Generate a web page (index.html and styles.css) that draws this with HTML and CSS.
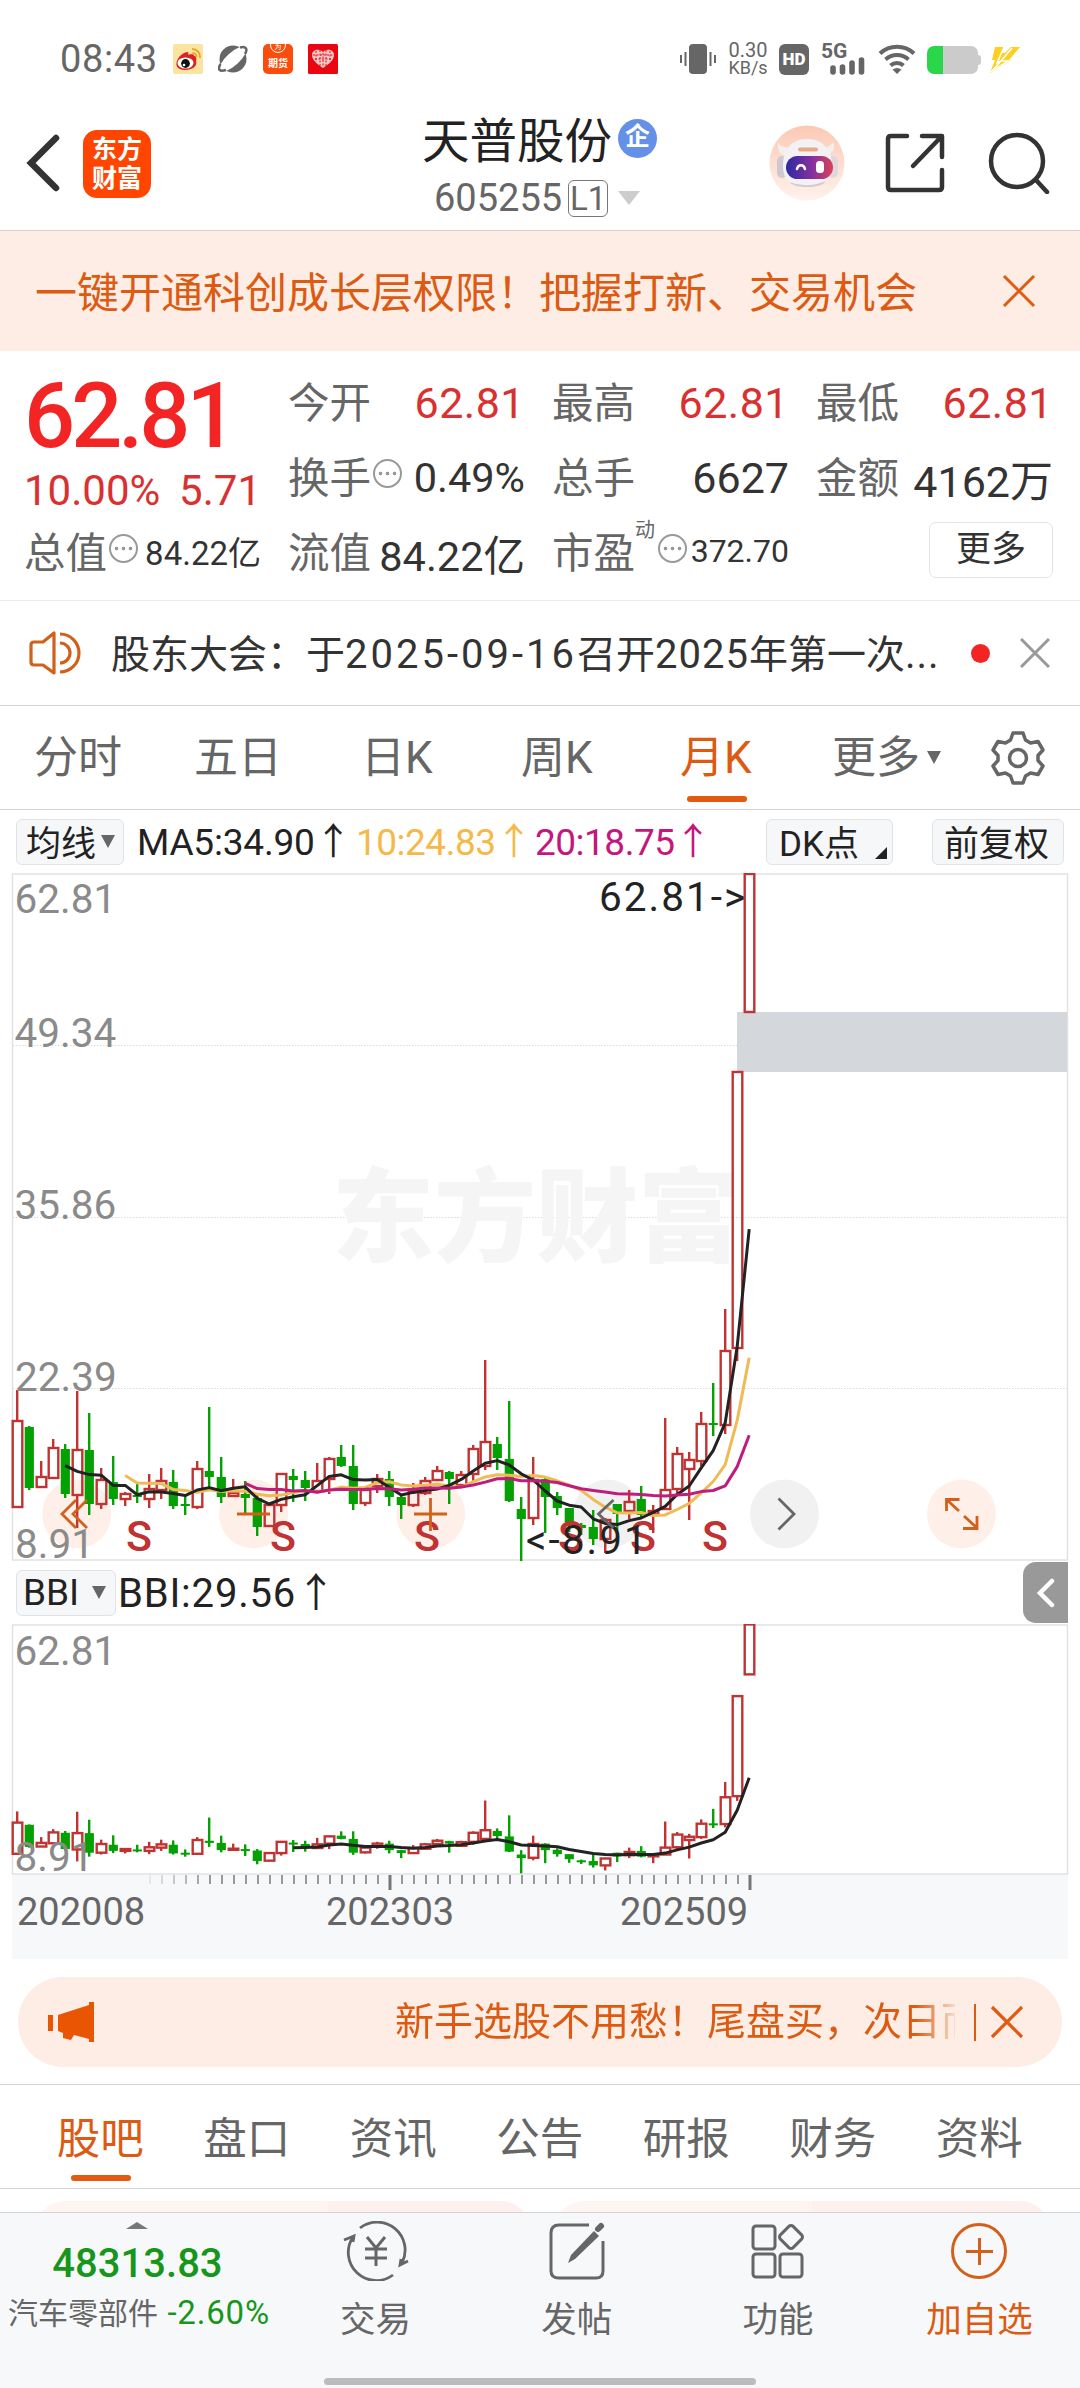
FILE: index.html
```html
<!DOCTYPE html>
<html lang="zh-CN">
<head>
<meta charset="UTF-8">
<meta name="viewport" content="width=device-width, initial-scale=1.0">
<title>天普股份 605255</title>
<link rel="stylesheet" href="styles.css">
</head>
<body>
    <div class="status-bar">
        <span class="time">08:43</span>
        <svg class="app-icon" width="30" height="30" viewBox="0 0 30 30">
            <rect width="30" height="30" rx="2" fill="#fbe3a0"/>
            <path d="M4 17c2-6 8-9 11-9 1 1 0 3 0 3s6-2 6 1c2 0 3 2 2 5 2 5-4 9-11 9S2 22 4 17z" fill="#dd2222"/>
            <ellipse cx="12.5" cy="19" rx="8" ry="5.5" fill="#fff"/>
            <circle cx="12.5" cy="19.5" r="4.4" fill="#111"/>
            <circle cx="11" cy="21" r="1.3" fill="#fff"/>
            <path d="M19 5a8 8 0 0 1 8 9M19.5 9a4 4 0 0 1 4 4" fill="none" stroke="#e8a72c" stroke-width="2"/>
        </svg>
        <svg class="app-icon" width="30" height="30" viewBox="0 0 30 30">
            <circle cx="15" cy="15" r="13.5" fill="#666"/>
            <ellipse cx="15" cy="15" rx="17" ry="6.5" transform="rotate(-42 15 15)" fill="#fff"/>
            <path d="M22 3.5C28 2 30 5 27 10M2.500 20C-1 26 2 28 8 26" fill="none" stroke="#666" stroke-width="2.5"/>
        </svg>
        <div class="app-icon futures"><i>为</i><b>期货</b></div>
        <svg class="app-icon" width="30" height="30" viewBox="0 0 30 30">
            <rect width="30" height="30" rx="1.5" fill="#ea0610"/>
            <path d="M15 24C9 20 4 16 4 11c0-5 7-7 11-3 4-4 11-2 11 3 0 5-5 9-11 13z" fill="#f8c9c9"/>
            <path d="M8 7v11M12 6v16M15 9v14M18 6v16M22 7v11M5 11h20M7 15h16" stroke="#ea0610" stroke-width="1" stroke-dasharray="2 1.5"/>
        </svg>
        <div class="status-right">
            <svg width="36" height="32" viewBox="0 0 36 32">
                <rect x="9" y="1" width="18" height="30" rx="4" fill="#666"/>
                <path d="M1 12v8M5.500 9v14M30.500 9v14M35 12v8" stroke="#666" stroke-width="2"/>
            </svg>
            <div class="net-speed"><span>0.30</span><span>KB/s</span></div>
            <div class="hd">HD</div>
            <div class="signal">
                <span>5G</span>
                <svg width="44" height="32" viewBox="0 0 44 32">
                    <path d="M12 25v4M21.5 24v5M31 20v9M40.500 17v12" stroke="#666" stroke-width="5.6" stroke-linecap="round"/>
                </svg>
            </div>
            <svg width="38" height="30" viewBox="0 0 38 30">
                <path d="M2 9.5a25 25 0 0 1 34 0M7.500 15.500a17 17 0 0 1 23 0M12.500 21.500a9.5 9.5 0 0 1 13 0" fill="none" stroke="#666" stroke-width="4"/>
                <path d="M19 30l-4.500-4.500q4.500-3 9 0z" fill="#666"/>
            </svg>
            <div class="battery"></div>
            <svg width="30" height="27" viewBox="0 0 30 27">
                <path d="M5 1h9l-3 6h4l6-6h9L19 14h3L0 27 5 14H2z" fill="#fbd01e"/>
                <path d="M14 1L7 17l4-2L1 26M22 2L11 15h8L3 24" fill="none" stroke="#fff" stroke-width="1.5"/>
            </svg>
        </div>
    </div>

    <div class="header">
        <svg class="back" width="34" height="58" viewBox="0 0 34 58">
            <path d="M30 4L5 29l25 25" fill="none" stroke="#333" stroke-width="6.5" stroke-linecap="round"/>
        </svg>
        <div class="logo"><span>东方</span><span>财富</span></div>
        <div class="title">
            <div class="name">天普股份<span class="badge">企</span></div>
            <div class="code">605255<span class="level">L1</span><i class="caret caret-title"></i></div>
        </div>
        <div class="header-icons">
            <svg width="76" height="76" viewBox="0 0 76 76">
                <defs>
                    <linearGradient id="halo" x1="0" y1="0" x2="0" y2="1">
                        <stop offset="0" stop-color="#fbc9b4"/>
                        <stop offset="1" stop-color="#fff2ec"/>
                    </linearGradient>
                    <linearGradient id="visor">
                        <stop offset="0" stop-color="#2c2aa0"/>
                        <stop offset=".55" stop-color="#8330a0"/>
                        <stop offset="1" stop-color="#dc4256"/>
                    </linearGradient>
                </defs>
                <circle cx="38" cy="38" r="37.5" fill="url(#halo)"/>
                <path d="M9 18c-1 8 3 13 10 13l5-8c-8 0-12-1-15-5zM64 17c3 7 0 12-8 13l-6-7c7 0 11-1 14-6z" fill="#f4efef"/>
                <rect x="8" y="31" width="10" height="22" rx="5" fill="#cfc8d0"/>
                <rect x="59" y="31" width="10" height="22" rx="5" fill="#ded8de"/>
                <path d="M14 40c0-15 8-26 24-26s25 11 25 26c0 16-8 21-25 21S14 56 14 40z" fill="#f3f1f4"/>
                <path d="M20 57q18 7 37-1-4 6-19 6-13 0-18-5z" fill="#cfcbd1"/>
                <rect x="29" y="22.5" width="20" height="4" rx="2" fill="#e5a988"/>
                <rect x="17" y="31" width="47" height="23" rx="11.5" fill="url(#visor)"/>
                <path d="M28 44c1-5 7-5 8 0" fill="none" stroke="#fff" stroke-width="2.5" stroke-linecap="round"/>
                <rect x="47" y="36" width="8" height="12" rx="3.5" fill="#fff"/>
            </svg>
            <svg class="share" width="60" height="60" viewBox="0 0 60 60">
                <path d="M22 3H6Q3 3 3 6v48q0 3 3 3h48q3 0 3-3V37M37 3h20v21M56 4L28 33" fill="none" stroke="#333" stroke-width="4.5" stroke-linecap="round" stroke-linejoin="round"/>
            </svg>
            <svg class="search" width="62" height="62" viewBox="0 0 62 62">
                <circle cx="29" cy="29" r="26" fill="none" stroke="#333" stroke-width="4.5"/>
                <path d="M48 48l11 12" stroke="#333" stroke-width="4.5" stroke-linecap="round"/>
            </svg>
        </div>
    </div>

    <div class="banner">
        <span>一键开通科创成长层权限！把握打新、交易机会</span>
        <svg width="34" height="34" viewBox="0 0 34 34"><path d="M2 2l30 30M32 2L2 32" stroke="#e2590f" stroke-width="3"/></svg>
    </div>

    <div class="quote">
        <div class="quote-main">
            <div class="price">62.81</div>
            <div class="change"><span>10.00%</span><span>5.71</span></div>
            <div class="cell small"><label>总值</label><i class="dots"></i><span>84.22亿</span></div>
        </div>
        <div class="quote-grid">
            <div class="cell up"><label>今开</label><span>62.81</span></div>
            <div class="cell up"><label>最高</label><span>62.81</span></div>
            <div class="cell up"><label>最低</label><span>62.81</span></div>
            <div class="cell mid"><label>换手</label><i class="dots"></i><span>0.49%</span></div>
            <div class="cell"><label>总手</label><span>6627</span></div>
            <div class="cell"><label>金额</label><span>4162万</span></div>
            <div class="cell mid"><label>流值</label><span>84.22亿</span></div>
            <div class="cell small"><label>市盈<sup>动</sup></label><i class="dots"></i><span>372.70</span></div>
            <div class="cell"><button class="more">更多</button></div>
        </div>
    </div>

    <div class="notice">
        <svg width="52" height="46" viewBox="0 0 52 46">
            <path d="M25 3v40L14 35H5q-3 0-3-3V15q0-3 3-3h9z" fill="none" stroke="#d2601a" stroke-width="3.2" stroke-linejoin="round"/>
            <path d="M31 13a10 10 0 0 1 0 20M31 4a19 19 0 0 1 0 38" fill="none" stroke="#d2601a" stroke-width="3.2"/>
        </svg>
        <span class="notice-text">股东大会：于<b class="date-text">2025-09-16</b>召开<b>2025</b>年第一次<b>...</b></span>
        <i class="dot"></i>
        <svg width="30" height="30" viewBox="0 0 30 30"><path d="M1 1l28 28M29 1L1 29" stroke="#999" stroke-width="3"/></svg>
    </div>

    <div class="period-tabs">
        <span>分时</span>
        <span>五日</span>
        <span>日K</span>
        <span>周K</span>
        <span class="active">月K</span>
        <span class="drop">更多<i class="caret"></i></span>
        <svg width="54" height="54" viewBox="0 0 54 54">
            <path d="M22 2h10l2.5 7 5 3 7.5-1.5 5 8.5-5 5.5v5l5 5.500-5 8.500-7.500-1.500-5 3L32 52H22l-2.500-7-5-3L7 43.500 2 35l5-5.500v-5L2 19l5-8.500 7.500 1.500 5-3z" fill="none" stroke="#666" stroke-width="3.5" stroke-linejoin="round"/>
            <circle cx="27" cy="27" r="8.5" fill="none" stroke="#666" stroke-width="3.5"/>
        </svg>
    </div>

    <div class="indicator-bar">
        <button class="chip">均线<i class="caret"></i></button>
        <span class="ma ma5">MA5:34.90↑</span>
        <span class="ma ma10">10:24.83↑</span>
        <span class="ma ma20">20:18.75↑</span>
        <button class="chip dk">DK点<i class="corner"></i></button>
        <button class="chip adjust">前复权</button>
    </div>

    <svg class="chart" id="kline" width="1080" height="688" viewBox="0 0 1080 688"></svg>

    <div class="indicator-bar bbi-bar">
        <button class="chip">BBI<i class="caret"></i></button>
        <span class="bbi">BBI:29.56↑</span>
        <button class="side-toggle">
            <svg width="20" height="30" viewBox="0 0 20 30"><path d="M16 3L4 15l12 12" fill="none" stroke="#fff" stroke-width="4.5" stroke-linecap="round"/></svg>
        </button>
    </div>

    <svg class="chart" id="bbi" width="1080" height="251" viewBox="0 0 1080 251"></svg>
    <svg class="chart" id="axis" width="1080" height="84" viewBox="0 0 1080 84"></svg>

    <div class="promo">
        <svg width="48" height="42" viewBox="0 0 48 42">
            <path d="M0 14h5v16H0zM10 14l31-10V1h5v40h-5v-3l-15-4-3 5-8-2v-5l-5-2z" fill="#ea5504"/>
        </svg>
        <div class="promo-text">新手选股不用愁！尾盘买，次日而</div>
        <i class="divider"></i>
        <svg width="34" height="34" viewBox="0 0 34 34"><path d="M2 2l30 30M32 2L2 32" stroke="#e2590f" stroke-width="3.2"/></svg>
    </div>

    <div class="info-tabs">
        <span class="active">股吧</span>
        <span>盘口</span>
        <span>资讯</span>
        <span>公告</span>
        <span>研报</span>
        <span>财务</span>
        <span>资料</span>
    </div>

    <div class="cards">
        <div class="card"></div>
        <div class="card card-right"></div>
    </div>

    <div class="bottom-bar">
        <div class="index">
            <i class="tri-up"></i>
            <div class="index-value">48313.83</div>
            <div class="index-name">汽车零部件 <span>-2.60%</span></div>
        </div>
        <div class="action">
            <svg width="66" height="60" viewBox="0 0 66 60">
                <path d="M17 7A28 28 0 0 1 59 42M50 54A28 28 0 0 1 10 16" fill="none" stroke="#666" stroke-width="2.8"/>
                <path d="M1 19l10-4-1 6M65 40l-8 4 1-6" fill="none" stroke="#666" stroke-width="2.8"/>
                <path d="M24 16l9 11 9-11M22 28h22M22 37h22M33 27v18" fill="none" stroke="#666" stroke-width="3"/>
            </svg>
            <span>交易</span>
        </div>
        <div class="action">
            <svg width="60" height="60" viewBox="0 0 60 60">
                <path d="M42 4H12q-8 0-8 8v38q0 7 8 7h37q7 0 7-7V20" fill="none" stroke="#666" stroke-width="3"/>
                <path d="M47 10l5 5-24 23-7 4 3-8z" fill="#666"/>
                <path d="M51 8l3-3" stroke="#666" stroke-width="6" stroke-linecap="round"/>
            </svg>
            <span>发帖</span>
        </div>
        <div class="action">
            <svg width="60" height="60" viewBox="0 0 60 60" fill="none" stroke="#666" stroke-width="3">
                <rect x="5" y="5" width="22" height="23" rx="3"/>
                <rect x="5" y="33" width="22" height="23" rx="3"/>
                <rect x="32" y="33" width="22" height="23" rx="3"/>
                <rect x="34" y="7" width="18" height="18" rx="3" transform="rotate(45 43 16)"/>
            </svg>
            <span>功能</span>
        </div>
        <div class="action add">
            <svg width="60" height="60" viewBox="0 0 60 60" fill="none" stroke="#d2601a" stroke-width="3">
                <circle cx="30" cy="30" r="26.5"/>
                <path d="M17 30.500h27M30.500 17v27"/>
            </svg>
            <span>加自选</span>
        </div>
        <i class="home-bar"></i>
    </div>

    <script src="chart.js"></script>
</body>
</html>
```
FILE: styles.css
```css
* {
    box-sizing: border-box;
}

body {
    margin: 0;
    width: 1080px;
    height: 2388px;
    overflow: hidden;
    background-color: #fff;
    color: #333;
    font-family: Roboto, "Noto Sans CJK SC", sans-serif;
}

svg {
    display: block;
    flex: none;
}

button {
    font: inherit;
    color: inherit;
    padding: 0;
}

.caret {
    display: inline-block;
    border: 7.5px solid transparent;
    border-top: 13px solid #666;
    border-bottom: 0;
}

/* status bar */
.status-bar {
    display: flex;
    align-items: center;
    height: 118px;
    padding: 0 60px;
    color: #666;
}

.time {
    width: 98px;
    margin-right: 15px;
    font-size: 38px;
    letter-spacing: 0.6px;
    line-height: 46px;
}

.app-icon {
    width: 30px;
    height: 30px;
    margin-right: 15px;
}

.futures {
    position: relative;
    overflow: hidden;
    border-radius: 5px;
    background-color: #fa4d0c;
    color: #fff;
    text-align: center;
}

.futures i {
    position: absolute;
    left: 7px;
    top: -7px;
    width: 16px;
    height: 16px;
    border: 1px solid #fff;
    border-radius: 50%;
    font-size: 7px;
    line-height: 18px;
    font-style: normal;
}

.futures b {
    display: block;
    padding-top: 13px;
    font-size: 10px;
    line-height: 13px;
}

.status-right {
    display: flex;
    align-items: center;
    margin-left: auto;
}

.net-speed {
    width: 40px;
    margin-left: 12px;
    text-align: center;
}

.net-speed span {
    display: block;
    font-size: 18px;
    line-height: 17px;
}

.net-speed span:first-child {
    font-size: 20px;
}

.hd {
    width: 30px;
    height: 31px;
    margin-left: 11px;
    border-radius: 6px;
    background-color: #666;
    color: #fff;
    font-size: 17px;
    font-weight: 900;
    line-height: 31px;
    text-align: center;
}

.signal {
    position: relative;
    margin: 0 13px 0 12px;
}

.signal span {
    position: absolute;
    left: 0;
    top: -1px;
    font-size: 21px;
    font-weight: 700;
    line-height: 18px;
}

.battery {
    position: relative;
    width: 51px;
    height: 28px;
    margin: 2px 12px 0 11px;
    border-radius: 7px;
    background: linear-gradient(to right, #2ad64a 16px, #cbcbcb 16px);
}

.battery::after {
    content: "";
    position: absolute;
    right: -3px;
    top: 9px;
    width: 3px;
    height: 10px;
    border-radius: 0 3px 3px 0;
    background-color: #cbcbcb;
}

/* header */
.header {
    display: flex;
    align-items: flex-start;
    height: 113px;
    padding-left: 26px;
    border-bottom: 1px solid #d2d2d2;
}

.back {
    margin-top: 16px;
}

.logo {
    width: 68px;
    height: 68px;
    margin: 12px 0 0 23px;
    padding-top: 5px;
    border-radius: 14px;
    background-color: #ff4500;
    color: #fff;
    font-size: 25px;
    font-weight: 700;
    line-height: 29px;
    text-align: center;
}

.logo span {
    display: block;
}

.title {
    width: 260px;
    margin-left: 269px;
}

.name {
    display: flex;
    align-items: center;
    height: 50px;
    margin-top: -6px;
    padding-left: 2px;
    color: #222;
    font-size: 47.5px;
    white-space: nowrap;
}

.badge {
    width: 39px;
    height: 39px;
    margin: 3px 0 0 6px;
    border-radius: 50%;
    background-color: #6590e8;
    color: #fff;
    font-size: 25px;
    font-weight: 700;
    line-height: 36px;
    text-align: center;
}

.code {
    display: flex;
    align-items: center;
    height: 60px;
    margin-top: 6px;
    padding-left: 14px;
    color: #666;
    font-size: 38px;
}

.level {
    width: 40px;
    height: 37px;
    margin-left: 6px;
    border: 1.5px solid #777;
    border-radius: 6px;
    font-size: 33px;
    line-height: 35px;
    text-align: center;
}

.caret-title {
    margin-left: 10px;
    border-width: 14px 11px 0;
    border-top-color: #ccc;
}

.header-icons {
    display: flex;
    align-items: center;
    margin: 7px 0 0 89px;
}

.share {
    margin-left: 40px;
}

.search {
    margin-left: 43px;
}

/* orange banner */
.banner {
    display: flex;
    align-items: center;
    justify-content: space-between;
    height: 120px;
    padding: 0 44px 0 35px;
    background-color: #fdede4;
    color: #dc5a12;
    font-size: 42px;
}

.banner span {
    margin-top: -4px;
}

/* quote */
.quote {
    display: flex;
    gap: 27px;
    height: 250px;
    padding: 14px 26px 0 24px;
    border-bottom: 1px solid #ebebeb;
}

.quote-main {
    width: 237px;
}

.price {
    height: 103px;
    color: #f22424;
    font-size: 90px;
    font-weight: 500;
    letter-spacing: -4px;
    line-height: 103px;
}

.change {
    display: flex;
    justify-content: space-between;
    height: 47px;
    color: #d93030;
    font-size: 42px;
    line-height: 46px;
}

.quote-grid {
    display: grid;
    grid-template-columns: repeat(3, 237px);
    grid-auto-rows: 75px;
    column-gap: 27px;
}

.cell {
    display: flex;
    align-items: center;
    height: 75px;
    font-size: 43px;
    white-space: nowrap;
}

.cell label {
    position: relative;
    margin-top: -5px;
    color: #666;
    font-size: 41.5px;
}

.cell sup {
    position: absolute;
    left: 83px;
    top: -2px;
    font-size: 20px;
    line-height: 24px;
}

.cell span,
.cell button {
    margin-left: auto;
}

.up span {
    color: #d93030;
    letter-spacing: 0.5px;
}

.mid span {
    font-size: 41.5px;
}

.small span {
    margin-top: -3px;
    font-size: 33px;
}

.dots {
    width: 29px;
    height: 29px;
    margin: -8px 0 0 2px;
    border: 2px solid #999;
    border-radius: 50%;
    background: radial-gradient(circle, #999 1.5px, transparent 2.2px) center / 7px 7px no-repeat,
        radial-gradient(circle, #999 1.5px, transparent 2.2px) 2px center / 7px 7px no-repeat,
        radial-gradient(circle, #999 1.5px, transparent 2.2px) 16px center / 7px 7px no-repeat;
}

.quote-grid .small .dots {
    margin-left: 23px;
}

.quote-grid .small span {
    font-size: 32px;
}

.more {
    width: 124px;
    height: 56px;
    margin-top: -5px;
    border: 1.5px solid #e2e5e8;
    border-radius: 7px;
    background-color: #fff;
    font-size: 35px;
    line-height: 50px;
}

/* notice */
.notice {
    display: flex;
    align-items: center;
    height: 105px;
    padding: 0 30px 0 29px;
    border-bottom: 1px solid #d2d2d2;
}

.notice-text {
    width: 830px;
    margin: -5px 0 0 30px;
    font-size: 39px;
    white-space: nowrap;
}

.notice-text b {
    font-size: 40px;
    font-weight: 400;
    letter-spacing: 1px;
}

.notice-text .date-text {
    letter-spacing: 3px;
}

.dot {
    width: 19px;
    height: 19px;
    margin: 0 auto 0 30px;
    border-radius: 50%;
    background-color: #f22424;
}

/* period tabs */
.period-tabs {
    display: flex;
    align-items: center;
    height: 104px;
    padding: 0 35px 0 34px;
    border-bottom: 1px solid #d2d2d2;
    color: #666;
    font-size: 44px;
}

.period-tabs span {
    position: relative;
    width: 160px;
    line-height: 104px;
}

.period-tabs span:nth-child(3) {
    padding-left: 7px;
}

.period-tabs span:nth-child(4) {
    padding-left: 7px;
}

.period-tabs span:nth-child(5) {
    padding-left: 6px;
}

.period-tabs .drop {
    width: 157px;
    left: -2px;
}

.drop .caret {
    margin-left: 7px;
    vertical-align: 9px;
}

.active {
    color: #dc5a12;
}

.active::after {
    content: "";
    position: absolute;
    left: 13px;
    bottom: 8px;
    width: 60px;
    height: 6px;
    border-radius: 3px;
    background-color: #e2590f;
}

/* indicator rows */
.indicator-bar {
    display: flex;
    align-items: center;
    height: 63px;
    padding: 0 16px;
    color: #222;
    font-size: 37px;
    white-space: nowrap;
}

.chip {
    display: flex;
    align-items: center;
    width: 108px;
    height: 46px;
    padding: 0 0 3px 9px;
    border: 1.5px solid #dfe2e7;
    border-radius: 6px;
    background-color: #f6f7f9;
    font-size: 35px;
}

.chip .caret {
    margin: 3px 0 0 5px;
}

.ma {
    margin-top: -5px;
    letter-spacing: -0.2px;
}

.ma5 {
    width: 219px;
    margin-left: 13px;
}

.ma10 {
    width: 179px;
    color: #f5b94a;
    letter-spacing: -0.5px;
}

.ma20 {
    color: #c5167e;
    letter-spacing: -0.5px;
}

.dk {
    position: relative;
    width: 127px;
    margin-left: auto;
    padding-left: 12px;
}

.corner {
    position: absolute;
    right: 5px;
    bottom: 5px;
    border-left: 12px solid transparent;
    border-bottom: 12px solid #222;
}

.adjust {
    width: 132px;
    margin-left: 39px;
    padding-left: 11px;
}

.bbi-bar {
    height: 63px;
    padding-right: 12px;
}

.bbi-bar .chip {
    width: 100px;
    padding: 0 0 0 6px;
    font-size: 37px;
}

.bbi-bar .caret {
    margin: 0 0 0 13px;
}

.bbi {
    margin: -6px 0 0 2px;
    font-size: 40px;
    letter-spacing: 0.8px;
}

.side-toggle {
    display: flex;
    align-items: center;
    justify-content: center;
    width: 45px;
    height: 61px;
    margin-left: auto;
    border: 0;
    border-radius: 13px 0 0 13px;
    background-color: #999;
}

/* charts */
.chart text {
    font-size: 40.5px;
    fill: #8a8a8a;
}

.chart .mark {
    fill: #222;
    letter-spacing: 2px;
}

.chart .sell {
    fill: #c13333;
    font-size: 43px;
    font-weight: 500;
    text-anchor: middle;
}

.chart .watermark {
    fill: #f5f5f6;
    font-size: 102px;
    font-weight: 900;
}

.chart .date {
    fill: #666;
    font-size: 38px;
}

/* promo pill */
.promo {
    display: flex;
    align-items: center;
    height: 90px;
    margin: 18px 18px 17px;
    padding: 0 38px 0 30px;
    border-radius: 45px;
    background-color: #fdede4;
    color: #dc5a12;
}

.promo-text {
    width: 560px;
    margin: -1px 0 0 299px;
    overflow: hidden;
    font-size: 39px;
    line-height: 60px;
    white-space: nowrap;
    -webkit-mask-image: linear-gradient(to right, #000 520px, transparent 566px);
    mask-image: linear-gradient(to right, #000 520px, transparent 566px);
}

.divider {
    width: 1.5px;
    height: 37px;
    margin: 0 auto 0 19px;
    background-color: #dc5a12;
}

/* info tabs */
.info-tabs {
    display: flex;
    height: 105px;
    padding-left: 27px;
    border-top: 1px solid #d2d2d2;
    border-bottom: 1px solid #d2d2d2;
    color: #666;
    font-size: 43.5px;
}

.info-tabs span {
    position: relative;
    width: 146.5px;
    line-height: 109px;
    text-align: center;
}

.info-tabs .active::after {
    left: 44px;
    bottom: 7px;
}

.cards {
    display: flex;
    gap: 23px;
    height: 23px;
    padding: 12px 30px 0 35px;
    overflow: hidden;
}

.card {
    flex: 1;
    height: 60px;
    border-radius: 30px;
    background: linear-gradient(to right, #fef5f2 59%, #fdf0ef 59%);
}

.card-right {
    background: linear-gradient(to right, #fef4f2 52%, #fdf0ef 52%);
}

/* bottom bar */
.bottom-bar {
    position: relative;
    display: flex;
    height: 176px;
    border-top: 1px solid #d2d2d2;
    background-color: #f7f8fa;
    color: #666;
}

.index {
    width: 275px;
    padding-top: 9px;
    text-align: center;
}

.tri-up {
    display: block;
    width: 22px;
    margin: 0 auto;
    border: 11px solid transparent;
    border-top: 0;
    border-bottom: 7px solid #777;
}

.index-value {
    margin-top: 10px;
    color: #16961a;
    font-size: 40px;
    font-weight: 500;
    line-height: 50px;
}

.index-name {
    margin: 2px 0 0 8px;
    font-size: 30px;
    line-height: 44px;
    text-align: left;
    white-space: nowrap;
}

.index-name span {
    margin-left: 2px;
    color: #16961a;
    font-size: 33px;
    letter-spacing: 0.8px;
}

.action {
    display: flex;
    flex-direction: column;
    align-items: center;
    width: 201.3px;
    padding-top: 8px;
    font-size: 35.5px;
}

.action span {
    margin-top: 16px;
    line-height: 46px;
}

.add {
    color: #dc5a12;
}

.home-bar {
    position: absolute;
    left: 324px;
    bottom: 3px;
    width: 432px;
    height: 7px;
    border-radius: 4px;
    background-color: #bbbcbe;
}
```
FILE: chart.js
```js
// one row per month, 2020-08 .. 2025-09: colour, high, body top, body bottom, low
// values are px below the 62.81 line
var candles = [
    ['r', 517, 548, 634, 634], ['g', 553, 554, 615, 617], ['r', 588, 604, 614, 614], ['r', 566, 575, 605, 606],
    ['g', 571, 576, 621, 625], ['r', 518, 577, 622, 655], ['g', 540, 577, 631, 642], ['r', 595, 607, 631, 636],
    ['g', 583, 609, 626, 632], ['r', 619, 621, 626, 633], ['g', 609, 622, 624, 630], ['r', 601, 616, 626, 635],
    ['r', 595, 608, 617, 626], ['g', 597, 609, 633, 636], ['g', 622, 631, 632, 642], ['r', 588, 596, 634, 636],
    ['g', 534, 598, 604, 615], ['g', 584, 604, 624, 630], ['r', 606, 620, 623, 623], ['g', 608, 621, 625, 640],
    ['g', 621, 625, 654, 663], ['r', 630, 632, 653, 654], ['r', 601, 601, 632, 639], ['g', 596, 603, 607, 629],
    ['g', 598, 607, 615, 628], ['r', 590, 608, 618, 618], ['r', 584, 586, 606, 621], ['g', 572, 584, 593, 594],
    ['g', 572, 593, 631, 637], ['r', 617, 617, 630, 633], ['r', 601, 606, 613, 620], ['g', 598, 606, 624, 633],
    ['g', 623, 624, 632, 646], ['r', 610, 618, 632, 634], ['r', 604, 608, 620, 622], ['r', 593, 598, 607, 608],
    ['g', 598, 599, 606, 631], ['r', 598, 602, 612, 614], ['r', 572, 576, 601, 609], ['r', 487, 569, 593, 597],
    ['g', 564, 571, 585, 597], ['g', 528, 586, 628, 629], ['g', 624, 636, 646, 688], ['r', 584, 607, 645, 652],
    ['g', 605, 606, 624, 660], ['g', 619, 623, 635, 642], ['g', 635, 635, 649, 659], ['g', 650, 652, 655, 662],
    ['g', 637, 654, 666, 672], ['r', 645, 647, 666, 680], ['g', 631, 631, 641, 657], ['r', 617, 629, 638, 646],
    ['g', 613, 626, 642, 644], ['r', 632, 638, 641, 660], ['r', 545, 617, 636, 636], ['r', 574, 581, 616, 621],
    ['r', 579, 587, 596, 647], ['r', 539, 551, 588, 593], ['g', 510, 550, 552, 563], ['r', 436, 478, 552, 561],
    ['r', 199, 199, 475, 488], ['r', 1, 1, 139, 139]
];
var RED = '#c13333', GREEN = '#04a004';
var closes = candles.map(function (c) { return c[0] === 'r' ? c[2] : c[3]; });

function xAt(i) {
    return 17.2 + 12 * i;
}

function average(i, n) {
    var sum = 0;
    for (var k = i - n + 1; k <= i; k++) sum += closes[k];
    return sum / n;
}

function drawCandles(scale) {
    return candles.map(function (c, i) {
        var x = xAt(i), v = c.slice(1).map(function (n) { return n * scale; });
        var wick = function (a, b, color) {
            return '<path d="M' + x + ' ' + a + 'V' + b + '" stroke="' + color + '" stroke-width="2.4"/>';
        };
        if (c[0] === 'g') {
            return wick(v[0], v[3], GREEN) + '<rect x="' + (x - 4.5) + '" y="' + v[1] + '" width="9.2" height="' + Math.max(v[2] - v[1], 2) + '" fill="' + GREEN + '"/>';
        }
        return wick(v[0], v[1], RED) + wick(v[2], v[3], RED) +
            '<rect x="' + (x - 4.5) + '" y="' + v[1] + '" width="9.6" height="' + Math.max(v[2] - v[1], 1) + '" fill="none" stroke="' + RED + '" stroke-width="2.4"/>';
    }).join('');
}

function drawLine(start, fn, color, scale) {
    var pts = [];
    for (var i = start; i < candles.length; i++) {
        pts.push(xAt(i).toFixed(1) + ',' + (fn(i) * scale).toFixed(1));
    }
    return '<polyline points="' + pts.join(' ') + '" fill="none" stroke="' + color + '" stroke-width="3" stroke-linejoin="round"/>';
}

function drawFrame(h) {
    return '<path d="M12.5 1H1067.5V' + h + 'H12.5z" fill="none" stroke="#e2e2e2" stroke-width="1.5"/>';
}

function drawKline() {
    var s = drawFrame(687);
    s += '<path d="M13 172.5H1067M13 344.5H1067M13 515.5H1067" stroke="#dcdcdc" stroke-dasharray="1.5 1.5"/>';
    s += '<text class="watermark" x="332" y="381">东方财富</text>';
    s += '<rect x="737" y="139" width="330" height="60" fill="#d4d7dc"/>';
    [76.7, 253.5, 430.7, 607.7, 784.5, 961.5].forEach(function (cx, i) {
        s += '<circle cx="' + cx + '" cy="641" r="34.5" fill="' + (i === 3 || i === 4 ? '#f1f1f1' : '#fef0e8') + '"/>';
    });
    s += drawCandles(1);
    s += drawLine(9, function (i) { return average(i, 10); }, '#efbb55', 1);
    s += drawLine(4, function (i) { return average(i, 5); }, '#222', 1);
    s += drawLine(19, function (i) { return average(i, 20); }, '#bf1d7c', 1);
    [139, 283, 427, 571, 643, 715].forEach(function (x) {
        s += '<text class="sell" x="' + x + '" y="677.5">S</text>';
    });
    s += '<text x="14.500" y="40">62.81</text><text x="14.500" y="173.5">49.34</text><text x="14.500" y="346">35.86</text>';
    s += '<text x="15" y="517.5">22.39</text><text x="15" y="685">8.91</text>';
    s += '<text class="mark" x="599" y="38">62.81-&gt;</text><text class="mark" x="526" y="680.5">&lt;-8.91</text>';
    // zoom / scroll controls
    s += '<g fill="none" stroke="#d2601a" stroke-width="2.8">' +
        '<path d="M76 627L62 641l14 14M87 627L73 641l14 14M237 641h33M414 641h33M430.5 625v33"/>' +
        '<path d="M959 638l-12-11M946.5 638v-11.5h13M964 643l12 11M977 643v12.5h-14"/></g>';
    s += '<path d="M613.5 627l-15 14 15 14M778.5 625.5l15.500 15.500-15.500 15.500" fill="none" stroke="#666" stroke-width="2.8"/>';
    document.getElementById('kline').innerHTML = s;
}

function drawBbi() {
    var scale = 249 / 687;
    var bbi = function (i) {
        return (average(i, 3) + average(i, 6) + average(i, 12) + average(i, 24)) / 4;
    };
    var s = drawFrame(250) + drawCandles(scale) + drawLine(23, bbi, '#222', scale);
    s += '<text x="14.5" y="41">62.81</text><text x="14.5" y="247">8.91</text>';
    document.getElementById('bbi').innerHTML = s;
}

function drawAxis() {
    var s = '<rect x="12" width="1056" height="84" fill="#f7f8fa"/>';
    for (var i = 11; i < candles.length; i++) {
        var major = i === 31 || i === 61;
        s += '<path d="M' + (18 + 12 * i) + ' 0v' + (major ? 15 : 9) + '" stroke="' + (major ? '#777' : '#999') +
            '" stroke-width="' + (major ? 3 : 2) + '" opacity="' + Math.min((i - 10) / 6, 1) + '"/>';
    }
    s += '<text class="date" x="17" y="50">202008</text><text class="date" x="326" y="50">202303</text><text class="date" x="620" y="50">202509</text>';
    document.getElementById('axis').innerHTML = s;
}

drawKline();
drawBbi();
drawAxis();
```
